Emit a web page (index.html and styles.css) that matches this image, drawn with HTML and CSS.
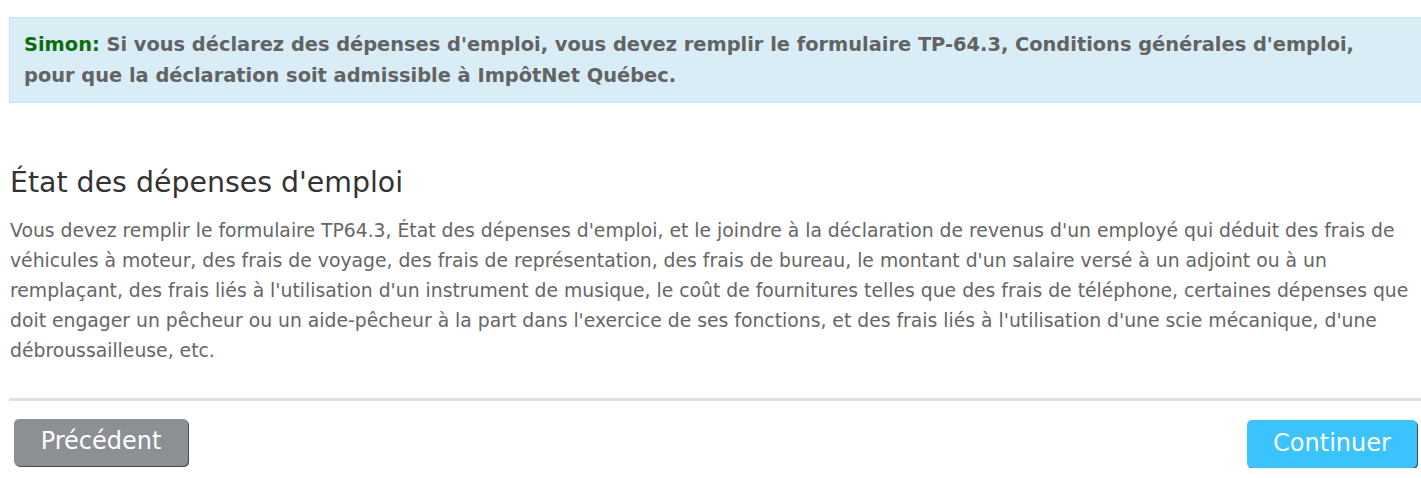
FILE: index.html
```html
<!DOCTYPE html>
<html lang="fr">

<head>
    <meta charset="UTF-8">
    <meta name="viewport" content="width=device-width, initial-scale=1.0">
    <title>État des dépenses d'emploi</title>
    <link rel="stylesheet" href="styles.css">
</head>

<body>
    <div class="page">
        <div class="alert-info">
            <span class="speaker">Simon:</span> Si vous déclarez des dépenses d'emploi, vous devez remplir le formulaire TP-64.3, Conditions générales d'emploi, pour que la déclaration soit admissible à ImpôtNet Québec.
        </div>

        <div class="section">
            <h2 class="section-title">État des dépenses d'emploi</h2>
            <p class="section-text">Vous devez remplir le formulaire TP64.3, État des dépenses d'emploi, et le joindre à la déclaration de revenus d'un employé qui déduit des frais de véhicules à moteur, des frais de voyage, des frais de représentation, des frais de bureau, le montant d'un salaire versé à un adjoint ou à un remplaçant, des frais liés à l'utilisation d'un instrument de musique, le coût de fournitures telles que des frais de téléphone, certaines dépenses que doit engager un pêcheur ou un aide-pêcheur à la part dans l'exercice de ses fonctions, et des frais liés à l'utilisation d'une scie mécanique, d'une débroussailleuse, etc.</p>
        </div>

        <div class="nav-buttons">
            <button class="btn btn-back">Précédent</button>
            <button class="btn btn-next">Continuer</button>
        </div>
    </div>
</body>

</html>
```

FILE: styles.css
```css
* {
    box-sizing: border-box;
    margin: 0;
    padding: 0;
}

body {
    font-family: "DejaVu Sans", Verdana, sans-serif;
    background-color: #fff;
    color: #333;
}

.page {
    margin-left: 9px;
    padding-top: 17px;
}

/* Message de Simon */
.alert-info {
    background-color: #d9edf7;
    border: 1px solid #c4e6f0;
    margin-right: -1px;
    padding: 11px 40px 11px 14px;
    font-size: 19.4px;
    font-weight: bold;
    line-height: 31px;
    color: #636363;
}

.speaker {
    color: #0b6e0b;
}

.section {
    padding-top: 63px;
}

.section-title {
    font-size: 28.4px;
    font-weight: normal;
    line-height: 34px;
    color: #333;
    padding-left: 1px;
}

.section-text {
    margin-top: 16px;
    font-size: 18.8px;
    line-height: 30px;
    color: #666;
    padding-left: 1px;
}

/* Boutons */
.nav-buttons {
    margin-top: 32px;
    border-top: 3px solid #e0e0e0;
    padding: 18px 4px 0 5px;
    display: flex;
    justify-content: space-between;
    align-items: flex-start;
}

.btn {
    font-family: inherit;
    font-size: 24px;
    color: #fff;
    border: none;
    border-radius: 5px;
    height: 47px;
    padding-bottom: 3px;
    cursor: pointer;
    box-shadow: 1px 1px 0 #4a4a4a;
}

.btn-back {
    background-color: #8c8f94;
    width: 174px;
}

.btn-next {
    background-color: #3ac3fc;
    width: 170px;
    height: 48px;
    margin-top: 1px;
}
```
